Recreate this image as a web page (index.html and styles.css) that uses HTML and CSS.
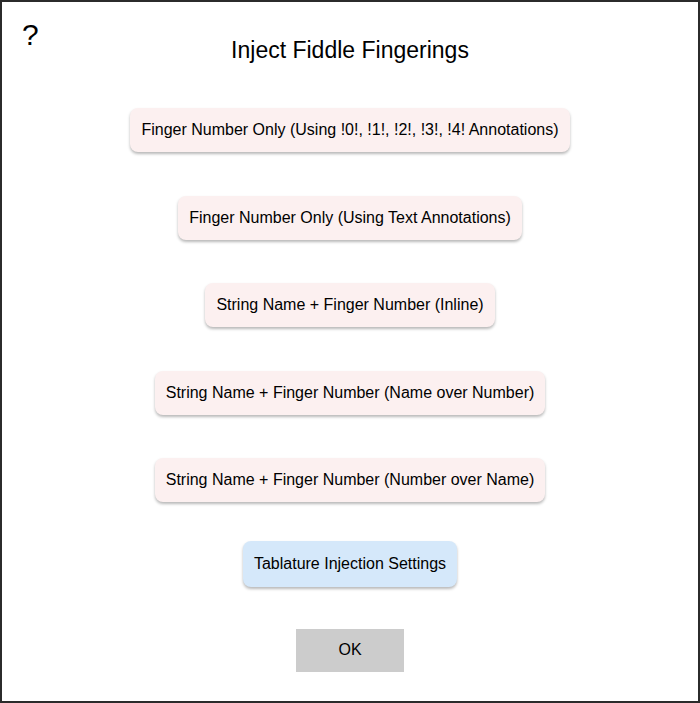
FILE: index.html
```html
<!DOCTYPE html>
<html>
<head>
<meta charset="utf-8">
<link rel="stylesheet" href="styles.css">
</head>
<body>
<div class="dialog">
  <div class="help">?</div>
  <h1 class="title">Inject Fiddle Fingerings</h1>
  <div class="actions">
    <button class="btn pink">Finger Number Only (Using !0!, !1!, !2!, !3!, !4! Annotations)</button>
    <button class="btn pink">Finger Number Only (Using Text Annotations)</button>
    <button class="btn pink">String Name + Finger Number (Inline)</button>
    <button class="btn pink">String Name + Finger Number (Name over Number)</button>
    <button class="btn pink">String Name + Finger Number (Number over Name)</button>
    <button class="btn blue">Tablature Injection Settings</button>
    <button class="ok">OK</button>
  </div>
</div>
</body>
</html>
```

FILE: styles.css
```css
html, body {
  margin: 0;
  padding: 0;
  background: #ffffff;
}
.dialog {
  position: relative;
  box-sizing: border-box;
  width: 700px;
  height: 703px;
  border: 2px solid #2b2b2b;
  font-family: "Liberation Sans", Arial, sans-serif;
  color: #000;
}
.help {
  position: absolute;
  left: 20px;
  top: 16px;
  font-size: 30px;
  line-height: 34px;
}
.title {
  margin: 36px 0 0 0;
  font-size: 23px;
  font-weight: normal;
  line-height: 25px;
  text-align: center;
}
.actions {
  display: flex;
  flex-direction: column;
  align-items: center;
  margin-top: 45px;
}
.btn {
  box-sizing: border-box;
  height: 44px;
  padding: 0 11px;
  border: none;
  border-radius: 8px;
  font-family: "Liberation Sans", Arial, sans-serif;
  font-size: 16px;
  color: #000;
  box-shadow: 0 2px 3px rgba(0, 0, 0, 0.28);
  margin-bottom: 43.5px;
}
.pink {
  background: #fcf0f0;
}
.blue {
  background: #d5e8fa;
  height: 46px;
  margin-top: -5px;
  margin-bottom: 42px;
}
.ok {
  width: 108px;
  height: 43px;
  border: none;
  border-radius: 0;
  background: #cccccc;
  font-family: "Liberation Sans", Arial, sans-serif;
  font-size: 16px;
  color: #000;
}
```
